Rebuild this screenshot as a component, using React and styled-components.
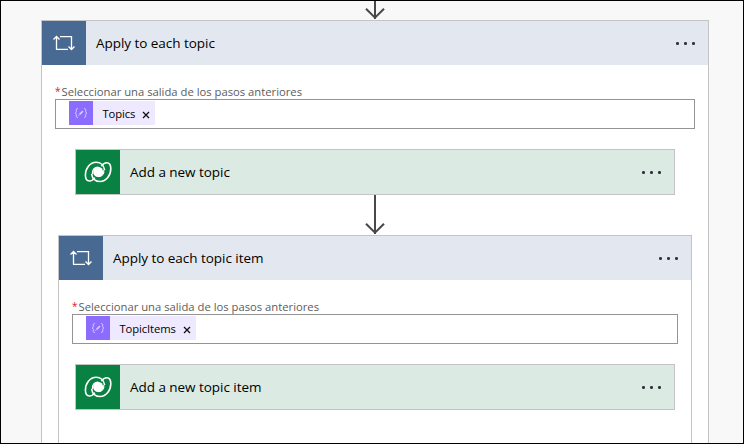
import React from "react";
import styled, { createGlobalStyle } from "styled-components";

const GlobalStyle = createGlobalStyle`
  * { box-sizing: border-box; }
  body { margin: 0; font-family: "Segoe UI", "Open Sans", "Noto Sans", sans-serif; }
`;

const Canvas = styled.main`
  display: flex;
  flex-direction: column;
  align-items: flex-start;
  width: 744px;
  height: 444px;
  overflow: hidden;
  border: 1px solid #000;
  background: #f8f8f8;
`;

const Connector = styled.svg`
  display: block;
  flex: none;
  width: 20px;
  height: ${(p) => p.$height}px;
  margin-left: ${(p) => p.$indent}px;
  fill: none;
  stroke: #484848;
  stroke-width: 2;
`;

const Scope = styled.section`
  flex: none;
  width: ${(p) => p.$width}px;
  height: ${(p) => p.$height}px;
  margin-left: ${(p) => p.$indent}px;
  border: 1px solid #c4c4c4;
  background: #fff;
`;

const Header = styled.header`
  display: flex;
  align-items: center;
  height: 44px;
  padding-right: 13px;
  background: ${(p) => p.$tint};
`;

const IconTile = styled.span`
  display: flex;
  flex: none;
  width: 44px;
  height: 44px;
  background: ${(p) => p.$color};
`;

const Title = styled.h2`
  flex: 1;
  margin: 0 0 0 10px;
  color: #000;
  font-size: 13.5px;
  font-weight: 400;
  line-height: 20px;
  letter-spacing: -0.04px;
  white-space: nowrap;
`;

const MenuButton = styled.button`
  display: flex;
  gap: 5px;
  padding: 0;
  border: 0;
  background: none;
`;

const Dot = styled.span`
  width: 3px;
  height: 3px;
  border-radius: 1.2px;
  background: #33333b;
`;

const Field = styled.div`
  padding: 19px 13px 0;
`;

const Label = styled.label`
  display: flex;
  height: 15px;
  color: #5c5c5c;
  font-size: 11.25px;
  line-height: 15px;
  white-space: nowrap;
`;

const Required = styled.span`
  width: 6.5px;
  color: #e81123;
  font-size: 10px;
`;

const Input = styled.div`
  display: flex;
  height: 30px;
  padding: 1px 13px;
  border: 1px solid #949494;
  background: #fff;
`;

const Token = styled.span`
  display: flex;
  align-items: center;
  width: ${(p) => p.$width}px;
  height: 24px;
  background: #efe9ff;
  color: #000;
  font-size: 11.25px;
`;

const TokenIcon = styled.span`
  flex: none;
  width: 24px;
  height: 24px;
  background: #8c6cff;
`;

const TokenText = styled.span`
  flex: 1;
  padding: 2px 0 0 9.5px;
  line-height: 24px;
  letter-spacing: -0.1px;
`;

const Remove = styled.svg`
  flex: none;
  width: 8px;
  height: 8px;
  margin: 3px 5px 0 0;
  stroke: #111;
  stroke-width: 1.3;
`;

const Action = styled.article`
  width: 600px;
  height: 46px;
  margin: 20px 0 0 ${(p) => p.$indent}px;
  border: 1px solid #c4c4c4;
`;

function LoopIcon() {
  return (
    <IconTile $color="#486991">
      <svg width="44" height="44" viewBox="0 0 44 44" fill="none" stroke="#fff" strokeWidth="1.3">
        <path d="M14.5 28.5V16M11.5 18.5l3-3 3 3M14 28.4h12" />
        <path d="M18 15.6h11.5V28M26.5 25.5l3 3 3-3" />
      </svg>
    </IconTile>
  );
}

function DataverseIcon() {
  return (
    <IconTile $color="#088142">
      <svg width="44" height="44" viewBox="0 0 44 44" fill="none" stroke="#fff" strokeWidth="1.6">
        <path d="M28.6 20C28 15 24.4 12.3 20.2 12.3C13.8 12.3 9.4 18.6 9.4 25C9.4 29 10.8 31 13.4 31C15.6 31 17.4 29.6 18.8 27.6" />
        <path d="M15.6 23.8C16.2 28.8 19.8 31.5 24 31.5C30.4 31.5 34.8 25.2 34.8 18.8C34.8 14.8 33.4 12.8 30.8 12.8C28.6 12.8 26.8 14.2 25.4 16.2" />
        <ellipse cx="22.1" cy="21.9" rx="5" ry="5.2" fill="#fff" stroke="none" />
        <path d="M16.4 24C15.9 20.2 18.2 17.3 22 17.2M27.8 19.8C28.3 23.6 26 26.5 22.2 26.6" strokeWidth="1.2" />
      </svg>
    </IconTile>
  );
}

function Menu() {
  return (
    <MenuButton aria-label="Menu">
      <Dot /><Dot /><Dot />
    </MenuButton>
  );
}

function Arrow({ height, indent }) {
  return (
    <Connector $height={height} $indent={indent} viewBox={`0 0 20 ${height}`}>
      <path d={`M10 0V${height - 1}M1 ${height - 11.3}l9 9 9-9`} />
    </Connector>
  );
}

function Picker({ name, width }) {
  return (
    <Field>
      <Label><Required>*</Required>Seleccionar una salida de los pasos anteriores</Label>
      <Input>
        <Token $width={width}>
          <TokenIcon>
            <svg width="24" height="24" viewBox="0 0 24 24" fill="none" stroke="#d6cbff" strokeWidth="1">
              <path d="M9 7.5c-1.4 0-1.7.5-1.7 1.5v1.4c0 1-.3 1.4-1.3 1.6 1 .2 1.3.6 1.3 1.6V15c0 1 .3 1.5 1.7 1.5M15 7.5c1.4 0 1.7.5 1.7 1.5v1.4c0 1 .3 1.4 1.3 1.6-1 .2-1.3.6-1.3 1.6V15c0 1-.3 1.5-1.7 1.5" />
              <path d="M10.5 13.5l3.4-3.4" strokeWidth="1.7" />
              <path d="M9.4 14.7l1-1" />
            </svg>
          </TokenIcon>
          <TokenText>{name}</TokenText>
          <Remove viewBox="0 0 8 8"><path d="M1 1l6 6M7 1L1 7" /></Remove>
        </Token>
      </Input>
    </Field>
  );
}

function AddAction({ title, indent }) {
  return (
    <Action $indent={indent}>
      <Header $tint="#dbebe3">
        <DataverseIcon />
        <Title>{title}</Title>
        <Menu />
      </Header>
    </Action>
  );
}

export default function App() {
  return (
    <>
      <GlobalStyle />
      <Canvas>
        <Arrow height={19} indent={364} />
        <Scope $width={668} $height={460} $indent={40}>
          <Header $tint="#e3e8f0">
            <LoopIcon />
            <Title>Apply to each topic</Title>
            <Menu />
          </Header>
          <Picker name="Topics" width={86} />
          <AddAction title="Add a new topic" indent={33} />
          <Arrow height={40} indent={323} />
          <Scope $width={634} $height={240} $indent={16}>
            <Header $tint="#e3e8f0">
              <LoopIcon />
              <Title>Apply to each topic item</Title>
              <Menu />
            </Header>
            <Picker name="TopicItems" width={110} />
            <AddAction title="Add a new topic item" indent={16} />
          </Scope>
        </Scope>
      </Canvas>
    </>
  );
}
